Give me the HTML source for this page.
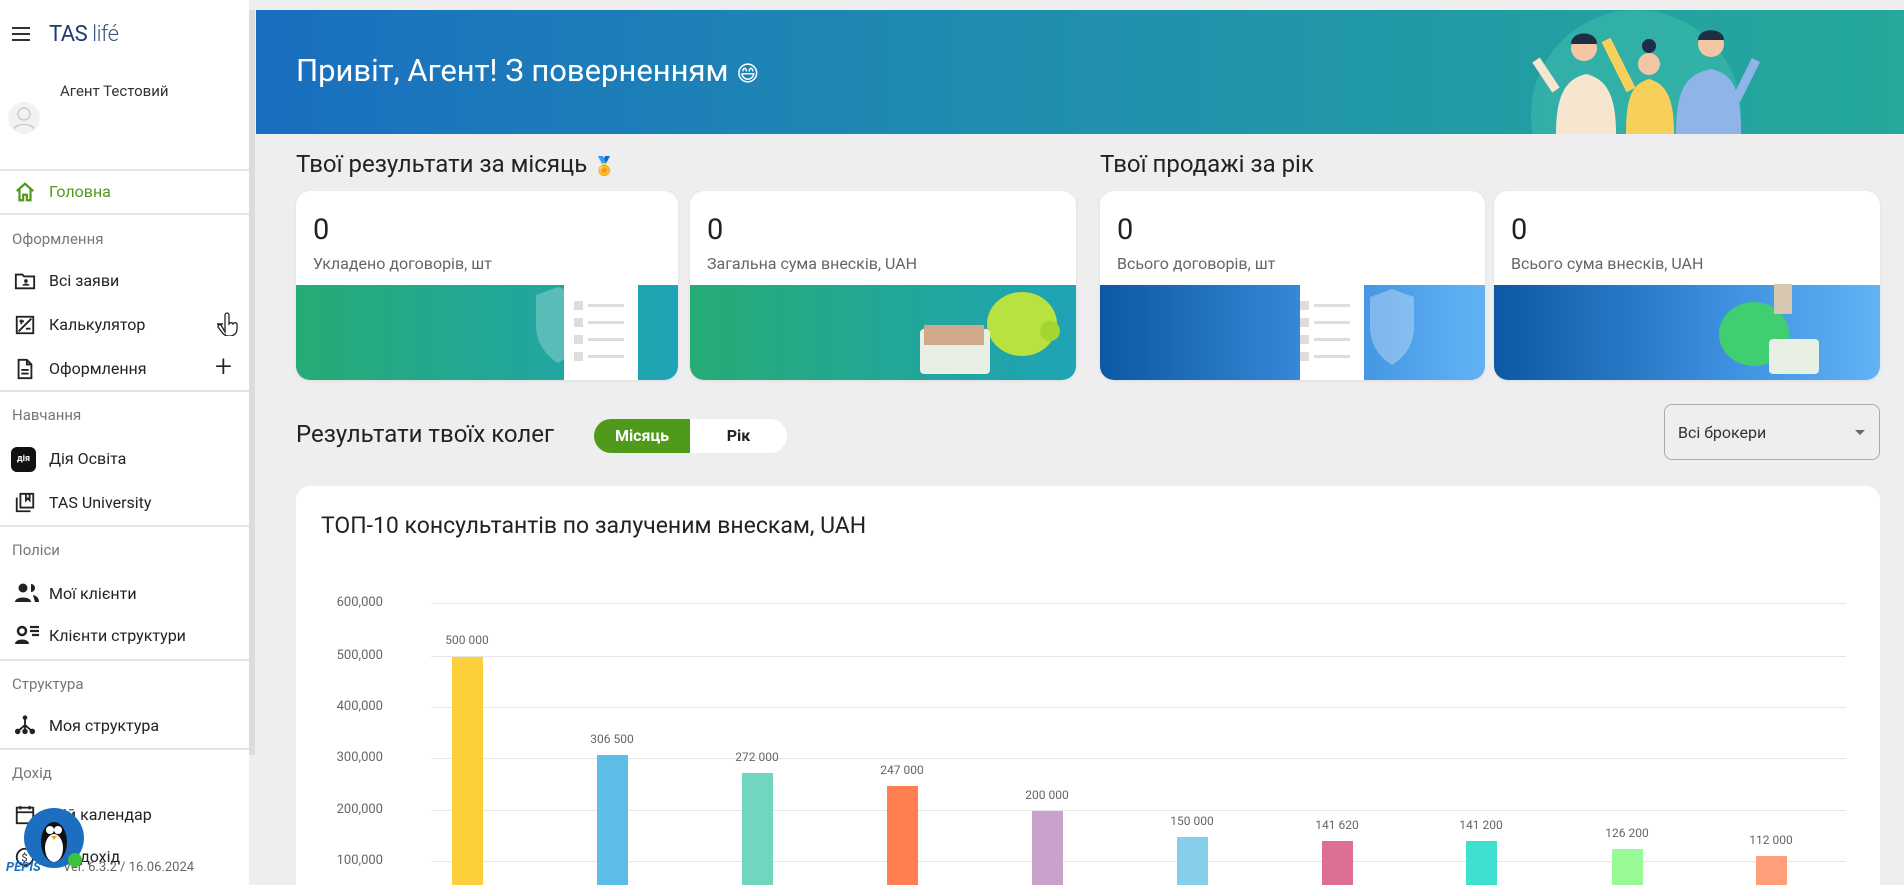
<!DOCTYPE html>
<html style="height:885px;overflow:hidden"><head><meta charset="utf-8"><style>
*{box-sizing:border-box;margin:0;padding:0}
body{width:1904px;height:885px;overflow:hidden;background:#eeeeee;font-family:"Roboto","Liberation Sans","DejaVu Sans",sans-serif;position:relative;color:#222}
.abs{position:absolute}
#side{left:0;top:0;width:249px;height:885px;background:#fff}
.hdr{position:absolute;left:12px;font-size:15px;color:#777}
.it{position:absolute;left:49px;font-size:16px;color:#222}
.div{position:absolute;left:0;width:249px;height:2px;background:#e4e4e4}
.ic{position:absolute;left:14px;width:22px;height:22px}
.card{position:absolute;top:191px;height:189px;border-radius:14px;overflow:hidden;background:#fff;box-shadow:0 1px 3px rgba(0,0,0,.08)}
.card .n{position:absolute;left:17px;top:22px;font-size:29px;color:#222}
.card .l{position:absolute;left:17px;top:63px;font-size:16px;color:#666}
.card .b{position:absolute;left:0;right:0;top:94px;bottom:0}
.g{background:linear-gradient(90deg,#27ab75,#1fa3b6)}
.bl{background:linear-gradient(90deg,#0b58a5,#3e8fde 60%,#62b3f5)}
.yl{position:absolute;left:318px;font-size:13px;color:#666;width:65px;text-align:right}
.gl{position:absolute;left:431px;width:1415px;height:1px;background:#e6e6e6}
.bar{position:absolute;width:31px;height:300px}
.vl{position:absolute;width:80px;text-align:center;font-size:12px;color:#666}
</style></head><body>
<div id="side" class="abs">
 <div class="abs" style="left:12px;top:27px;width:18px;height:2px;background:#333;box-shadow:0 6px 0 #333,0 12px 0 #333"></div>
 <div class="abs" style="left:49px;top:22px;font-size:22px;color:#1d3d6b;letter-spacing:-0.5px">TAS <span style="font-weight:300;color:#3d5a80">lifé</span></div>
 <div class="abs" style="left:60px;top:82px;font-size:15px;color:#333">Агент Тестовий</div>
 <div class="abs" style="left:8px;top:102px;width:32px;height:32px;border-radius:50%;background:#f2f2f2"><svg width="32" height="32"><circle cx="16" cy="12" r="6" fill="none" stroke="#ccc" stroke-width="1.5"/><path d="M6 27c2-6 18-6 20 0" fill="none" stroke="#ccc" stroke-width="1.5"/></svg></div>
 <div class="div" style="top:169px"></div>
 <svg class="ic" style="top:181px" viewBox="0 0 24 24"><path d="M3 11 12 3l9 8M6 9v12h4v-6h4v6h4V9" fill="none" stroke="#4f9a1a" stroke-width="2.4"/></svg>
 <div class="it" style="top:182px;color:#4f9a1a">Головна</div>
 <div class="div" style="top:213px"></div>
 <div class="hdr" style="top:230px">Оформлення</div>
 <svg class="ic" style="top:270px" viewBox="0 0 24 24"><path d="M2 5h7l2 2h11v13H2z" fill="none" stroke="#222" stroke-width="2"/><circle cx="13" cy="12" r="2" fill="#222"/><path d="M9 17c1-3 7-3 8 0z" fill="#222"/></svg>
 <div class="it" style="top:271px">Всі заяви</div>
 <svg class="ic" style="top:314px" viewBox="0 0 24 24"><rect x="3" y="3" width="18" height="18" fill="none" stroke="#222" stroke-width="2"/><path d="M5 19 19 5M6 8h5M8 6v5M13 16h5" stroke="#222" stroke-width="2"/></svg>
 <div class="it" style="top:315px">Калькулятор</div>
 <svg class="abs" style="left:216px;top:310px" width="24" height="26" viewBox="0 0 24 26"><path d="M9 22V5a2 2 0 0 1 4 0v9l1-1a2 2 0 0 1 3 1l1-1a2 2 0 0 1 3 1v5c0 4-3 7-7 7h-2c-3 0-5-2-7-5l-3-4a2 2 0 0 1 3-2z" fill="#fff" stroke="#222" stroke-width="1.3"/><path d="M1 14h6" stroke="#222" stroke-width="1.5"/></svg>
 <svg class="ic" style="top:358px" viewBox="0 0 24 24"><path d="M5 2h9l5 5v15H5z M14 2v5h5M8 13h8M8 17h8" fill="none" stroke="#222" stroke-width="2"/></svg>
 <div class="it" style="top:359px">Оформлення</div>
 <div class="abs" style="left:215px;top:349px;font-size:30px;font-weight:300;color:#222">+</div>
 <div class="div" style="top:390px"></div>
 <div class="hdr" style="top:406px">Навчання</div>
 <div class="abs" style="left:11px;top:447px;width:25px;height:25px;border-radius:6px;background:#111;color:#fff;font-size:9px;font-weight:bold;line-height:25px;text-align:center">дія</div>
 <div class="it" style="top:449px">Дія Освіта</div>
 <svg class="ic" style="top:492px" viewBox="0 0 24 24"><path d="M3 6v15h15M7 2h14v15H7z M13 2v7l2-2 2 2V2" fill="none" stroke="#222" stroke-width="2"/></svg>
 <div class="it" style="top:493px">TAS University</div>
 <div class="div" style="top:525px"></div>
 <div class="hdr" style="top:541px">Поліси</div>
 <svg class="ic" style="top:582px;width:26px" viewBox="0 0 26 22"><circle cx="9" cy="6" r="4.5" fill="#222"/><path d="M1 20c0-6 16-6 16 0z M17 2a4 4 0 0 1 0 8M19 13c4 1 6 3 6 7h-4" fill="#222"/></svg>
 <div class="it" style="top:584px">Мої клієнти</div>
 <svg class="ic" style="top:624px;width:26px" viewBox="0 0 26 22"><circle cx="8" cy="7" r="4" fill="none" stroke="#222" stroke-width="2.5"/><path d="M1 20c0-6 14-6 14 0z" fill="#222"/><path d="M16 3h9M16 7h9M18 11h7" stroke="#222" stroke-width="2.2"/></svg>
 <div class="it" style="top:626px">Клієнти структури</div>
 <div class="div" style="top:659px"></div>
 <div class="hdr" style="top:675px">Структура</div>
 <svg class="ic" style="top:714px" viewBox="0 0 24 24"><circle cx="12" cy="4" r="2.5" fill="#222"/><circle cx="4" cy="19" r="3" fill="#222"/><circle cx="12" cy="19" r="3" fill="#222"/><circle cx="20" cy="19" r="3" fill="#222"/><path d="M12 4v15M4 19l8-7 8 7" stroke="#222" stroke-width="2" fill="none"/></svg>
 <div class="it" style="top:716px">Моя структура</div>
 <div class="div" style="top:748px"></div>
 <div class="hdr" style="top:764px">Дохід</div>
 <svg class="ic" style="top:804px" viewBox="0 0 24 24"><rect x="3" y="4" width="18" height="17" fill="none" stroke="#222" stroke-width="2"/><path d="M3 9h18M7 2v4M17 2v4" stroke="#222" stroke-width="2"/></svg>
 <div class="it" style="top:805px">Мій календар</div>
 <svg class="ic" style="top:846px" viewBox="0 0 24 24"><circle cx="12" cy="12" r="9" fill="none" stroke="#222" stroke-width="2"/><text x="8" y="17" font-size="12" fill="#222">$</text></svg>
 <div class="it" style="top:847px">Мій дохід</div>
 <div class="abs" style="left:63px;top:860px;font-size:13px;color:#666">Ver. 6.3.2 / 16.06.2024</div>
 <div class="abs" style="left:24px;top:808px;width:60px;height:60px;border-radius:50%;background:#1c6fc0"><svg width="60" height="60"><ellipse cx="30" cy="34" rx="13" ry="20" fill="#111"/><ellipse cx="30" cy="40" rx="9" ry="14" fill="#fff"/><circle cx="26" cy="22" r="4" fill="#fff"/><circle cx="34" cy="22" r="4" fill="#fff"/><path d="M27 28h6l-3 4z" fill="#f5a623"/></svg></div>
 <div class="abs" style="left:68px;top:853px;width:14px;height:14px;border-radius:50%;background:#3ac43a"></div>
 <div class="abs" style="left:6px;top:860px;font-size:13px;font-weight:bold;color:#1c6fc0;font-style:italic">PEPIS</div>
</div>
<div class="abs" style="left:249px;top:10px;width:6px;height:745px;background:#dcdcdc"></div>

<div class="abs" style="left:256px;top:10px;width:1648px;height:124px;background:linear-gradient(90deg,#1a6ec0 0%,#1f8db0 45%,#25a99a 100%);overflow:hidden">
 <div class="abs" style="left:40px;top:42px;font-size:31px;color:#fff">Привіт, Агент! З поверненням <span style="font-size:22px">😄</span></div>
 <svg class="abs" style="left:1260px;top:0" width="300" height="124" viewBox="0 0 300 124">
  <circle cx="120" cy="105" r="105" fill="#3fbfae" opacity=".5"/>
  <path d="M40 124c0-40 10-55 30-60 20 5 30 20 30 60z" fill="#f6e6cf"/>
  <circle cx="68" cy="38" r="13" fill="#f3c7a3"/><path d="M55 34c0-14 26-14 26 0z" fill="#1f2d45"/>
  <path d="M40 80 20 50" stroke="#f6e6cf" stroke-width="9"/>
  <path d="M110 124c0-35 5-50 23-55 18 5 25 20 25 55z" fill="#f7cf5b"/>
  <path d="M115 80 90 30" stroke="#f7cf5b" stroke-width="10"/>
  <circle cx="133" cy="54" r="11" fill="#f3c7a3"/><circle cx="133" cy="36" r="7" fill="#1f2d45"/>
  <path d="M160 124c0-45 10-60 35-65 22 5 30 20 30 65z" fill="#8fb5e8"/>
  <circle cx="195" cy="34" r="13" fill="#f3c7a3"/><path d="M182 30c0-13 26-13 26 0z" fill="#1f2d45"/>
  <path d="M220 90 240 50" stroke="#8fb5e8" stroke-width="9"/>
 </svg>
</div>

<div class="abs" style="left:296px;top:150px;font-size:24px;color:#222">Твої результати за місяць <span style="font-size:18px">🏅</span></div>
<div class="abs" style="left:1100px;top:150px;font-size:24px;color:#222">Твої продажі за рік</div>

<div class="card" style="left:296px;width:382px"><div class="n">0</div><div class="l">Укладено договорів, шт</div><div class="b g">
 <svg class="abs" style="left:220px;top:0" width="162" height="95"><path d="M20 10 42 2l22 8v30c0 20-12 32-22 38-10-6-22-18-22-38z" fill="#fff" opacity=".25"/><rect x="48" y="-14" width="74" height="109" fill="#fff"/><g fill="#ddd"><rect x="58" y="16" width="9" height="9"/><rect x="72" y="19" width="36" height="3"/><rect x="58" y="33" width="9" height="9"/><rect x="72" y="36" width="36" height="3"/><rect x="58" y="50" width="9" height="9"/><rect x="72" y="53" width="36" height="3"/><rect x="58" y="67" width="9" height="9"/><rect x="72" y="70" width="36" height="3"/></g></svg>
</div></div>
<div class="card" style="left:690px;width:386px"><div class="n">0</div><div class="l">Загальна сума внесків, UAH</div><div class="b g">
 <svg class="abs" style="left:220px;top:-6px" width="166" height="100"><ellipse cx="112" cy="45" rx="35" ry="32" fill="#b7e23f"/><circle cx="140" cy="52" r="10" fill="#a5d52f"/><rect x="10" y="50" width="70" height="45" rx="4" fill="#e8efe5"/><rect x="14" y="46" width="60" height="20" fill="#cfa98a"/></svg>
</div></div>
<div class="card" style="left:1100px;width:385px"><div class="n">0</div><div class="l">Всього договорів, шт</div><div class="b bl">
 <svg class="abs" style="left:200px;top:0" width="185" height="95"><path d="M70 12 92 4l22 8v30c0 20-12 32-22 38-10-6-22-18-22-38z" fill="#fff" opacity=".3"/><rect x="-10" y="-14" width="74" height="109" fill="#fff"/><g fill="#ddd"><rect x="0" y="16" width="9" height="9"/><rect x="14" y="19" width="36" height="3"/><rect x="0" y="33" width="9" height="9"/><rect x="14" y="36" width="36" height="3"/><rect x="0" y="50" width="9" height="9"/><rect x="14" y="53" width="36" height="3"/><rect x="0" y="67" width="9" height="9"/><rect x="14" y="70" width="36" height="3"/></g></svg>
</div></div>
<div class="card" style="left:1494px;width:386px"><div class="n">0</div><div class="l">Всього сума внесків, UAH</div><div class="b bl">
 <svg class="abs" style="left:200px;top:-6px" width="186" height="100"><ellipse cx="60" cy="55" rx="35" ry="32" fill="#3fcf70"/><rect x="75" y="60" width="50" height="35" rx="4" fill="#e8efe5"/><rect x="80" y="5" width="18" height="30" fill="#d7c7b0"/></svg>
</div></div>

<div class="abs" style="left:296px;top:420px;font-size:24px;color:#222">Результати твоїх колег</div>
<div class="abs" style="left:594px;top:419px;width:193px;height:34px;border-radius:17px;background:#fff;overflow:hidden">
 <div class="abs" style="left:0;top:0;width:96px;height:34px;background:#4f9a1a;color:#fff;font-weight:bold;font-size:16px;line-height:34px;text-align:center">Місяць</div>
 <div class="abs" style="left:96px;top:0;width:97px;height:34px;color:#222;font-weight:bold;font-size:16px;line-height:34px;text-align:center">Рік</div>
</div>
<div class="abs" style="left:1664px;top:404px;width:216px;height:56px;border:1px solid #aaa;border-radius:8px">
 <div class="abs" style="left:13px;top:18px;font-size:16px;color:#333">Всі брокери</div>
 <div class="abs" style="right:14px;top:25px;border-left:5px solid transparent;border-right:5px solid transparent;border-top:5px solid #666"></div>
</div>

<div class="abs" style="left:296px;top:486px;width:1584px;height:399px;background:#fff;border-radius:14px 14px 0 0;overflow:hidden">
<div class="abs" style="left:25px;top:26px;font-size:23px;color:#222">ТОП-10 консультантів по залученим внескам, UAH</div>
</div>
<div class="abs" style="left:0;top:0;width:1904px;height:885px;overflow:hidden">
<div class="gl" style="top:603px"></div><div class="yl" style="top:595px">600,000</div>
<div class="gl" style="top:656px"></div><div class="yl" style="top:648px">500,000</div>
<div class="gl" style="top:707px"></div><div class="yl" style="top:699px">400,000</div>
<div class="gl" style="top:758px"></div><div class="yl" style="top:750px">300,000</div>
<div class="gl" style="top:810px"></div><div class="yl" style="top:802px">200,000</div>
<div class="gl" style="top:861px"></div><div class="yl" style="top:853px">100,000</div>

<div class="bar" style="left:452px;top:657px;background:#fdd03b"></div><div class="vl" style="left:427px;top:633px">500 000</div>
<div class="bar" style="left:597px;top:755px;background:#5bbde8"></div><div class="vl" style="left:572px;top:732px">306 500</div>
<div class="bar" style="left:742px;top:773px;background:#70d6c2"></div><div class="vl" style="left:717px;top:750px">272 000</div>
<div class="bar" style="left:887px;top:786px;background:#ff7f50"></div><div class="vl" style="left:862px;top:763px">247 000</div>
<div class="bar" style="left:1032px;top:811px;background:#c9a1cb"></div><div class="vl" style="left:1007px;top:788px">200 000</div>
<div class="bar" style="left:1177px;top:837px;background:#87ceeb"></div><div class="vl" style="left:1152px;top:814px">150 000</div>
<div class="bar" style="left:1322px;top:841px;background:#db7093"></div><div class="vl" style="left:1297px;top:818px">141 620</div>
<div class="bar" style="left:1466px;top:841px;background:#40e0d0"></div><div class="vl" style="left:1441px;top:818px">141 200</div>
<div class="bar" style="left:1612px;top:849px;background:#98fb98"></div><div class="vl" style="left:1587px;top:826px">126 200</div>
<div class="bar" style="left:1756px;top:856px;background:#ffa07a"></div><div class="vl" style="left:1731px;top:833px">112 000</div>
</div>
</body></html>
